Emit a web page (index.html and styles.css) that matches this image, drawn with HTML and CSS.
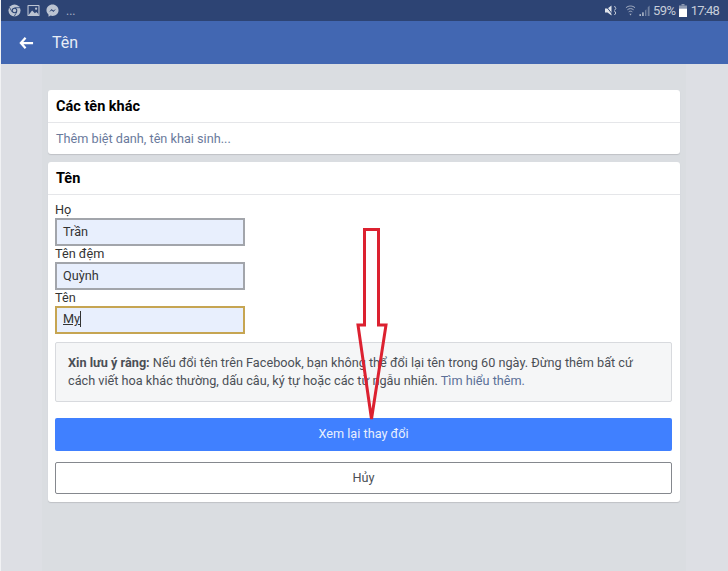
FILE: index.html
```html
<!DOCTYPE html>
<html lang="vi">
<head>
<meta charset="utf-8">
<title>Tên</title>
<link rel="stylesheet" href="styles.css">
</head>
<body>
<div class="page">
  <div class="status">
    <div class="status-left">
      <svg class="si" viewBox="0 0 14 14"><circle cx="7" cy="7" r="6.500" fill="#bcc4d2"/><circle cx="7" cy="7" r="3" fill="#2d4474"/><circle cx="7" cy="7" r="1.800" fill="#bcc4d2"/><path d="M7 4H13M4.400 8.500L1.500 3.500M9.600 8.500L6.500 13.500" stroke="#2d4474" stroke-width="0.900"/></svg>
      <svg class="si" viewBox="0 0 14 14"><rect x="0.500" y="1" width="13" height="12" rx="1" fill="#bcc4d2"/><rect x="1.700" y="2.200" width="10.600" height="9.600" fill="#2d4474"/><path d="M1.700 11.800L5.500 7L8.500 10L10 8.500L12.300 10.800V11.800Z" fill="#bcc4d2"/><circle cx="9.800" cy="5" r="1.200" fill="#bcc4d2"/></svg>
      <svg class="si" viewBox="0 0 14 14"><path d="M7 0.500C3.300 0.500 0.500 3.200 0.500 6.700C0.500 8.500 1.300 10.100 2.700 11.200V13.700L5 12.500C5.600 12.700 6.300 12.800 7 12.800C10.700 12.800 13.500 10.200 13.500 6.700C13.500 3.200 10.700 0.500 7 0.500Z" fill="#bcc4d2"/><path d="M3.300 8.600L6 5.400L7.800 7.100L10.700 5.400L8 8.600L6.200 6.900Z" fill="#2d4474"/></svg>
      <span class="dots">...</span>
    </div>
    <div class="status-right">
      <svg class="mute" viewBox="0 0 12 11"><path d="M0 3.500H2.500L6.500 0.500V10.500L2.500 7.500H0Z" fill="#dfe3ea"/><path d="M0.500 0.500L8 10" stroke="#2d4474" stroke-width="1"/><path d="M9.500 1L10.800 3.500L9.500 5.500M9.500 6L10.800 8L9.500 10" stroke="#c3cad6" fill="none"/></svg>
      <svg class="wifi" viewBox="0 0 12 13"><path d="M1 3.500C4 1 8 1 11 3.500M2.600 5.700C4.800 4 7.200 4 9.400 5.700M4 8C5.300 7 6.700 7 8 8" stroke="#aeb7c8" stroke-width="1" fill="none"/><path d="M6 12L4.800 10H7.200Z" fill="#aeb7c8"/></svg>
      <svg class="signal" viewBox="0 0 12 12"><rect x="0" y="10" width="1.500" height="2" fill="#c3cad6"/><rect x="3" y="8" width="1.500" height="4" fill="#c3cad6"/><path d="M6 12V6L7.500 4.500V12ZM9 12V2.500L11 0.500V12Z" fill="#6f7f9f"/></svg>
      <span class="pct">59%</span>
      <svg class="batt" viewBox="0 0 8 13"><rect x="2.500" y="0" width="3" height="1.500" fill="#8d99b1"/><rect x="0" y="1.500" width="8" height="3" fill="#8d99b1"/><rect x="0" y="4.500" width="8" height="8.500" fill="#fff"/></svg>
      <span class="clock">17:48</span>
    </div>
  </div>
  <header class="topbar">
    <svg class="back" viewBox="0 0 16 14"><path d="M7 1.500L2 7L7 12.500M2.500 7H15" stroke="#fff" stroke-width="2.400" fill="none"/></svg>
    <span class="title">Tên</span>
  </header>
  <main class="content">
    <section class="card">
      <h2 class="card-head">Các tên khác</h2>
      <div class="card-link">Thêm biệt danh, tên khai sinh...</div>
    </section>
    <section class="card">
      <h2 class="card-head">Tên</h2>
      <div class="form">
        <div class="fields">
          <label class="field">Họ<span class="input">Trần</span></label>
          <label class="field">Tên đệm<span class="input">Quỳnh</span></label>
          <label class="field">Tên<span class="input focus"><span class="typed">My</span></span></label>
        </div>
        <div class="notice"><b>Xin lưu ý rằng:</b> Nếu đổi tên trên Facebook, bạn không thể đổi lại tên trong 60 ngày. Đừng thêm bất cứ cách viết hoa khác thường, dấu câu, ký tự hoặc các từ ngẫu nhiên. <span class="more">Tìm hiểu thêm.</span></div>
        <div class="btn primary">Xem lại thay đổi</div>
        <div class="btn secondary">Hủy</div>
      </div>
    </section>
  </main>
  <svg class="arrow" viewBox="0 0 728 571"><path d="M364.500 229.500H378.500V325H386L371.500 419L358 325H364.500Z" fill="none" stroke="#dc2130" stroke-width="3"/></svg>
</div>
</body>
</html>
```
FILE: styles.css
```css
* { box-sizing: border-box; }
html, body { margin: 0; padding: 0; }
body { font-family: Roboto, "Liberation Sans", sans-serif; }
.page { position: relative; width: 728px; height: 571px; overflow: hidden; background: #dddfe4; border-left: 1px solid #f1f2f4; display: flex; flex-direction: column; }
.status { height: 21px; background: #2d4474; display: flex; justify-content: space-between; align-items: center; padding: 0 9px 0 7px; flex: none; }
.status-left, .status-right { display: flex; align-items: center; }
.status-left { gap: 6px; }
.si { width: 13px; height: 13px; display: block; }
.dots { color: #a9b2c4; font-size: 12px; margin-left: 1px; }
.mute { width: 12px; height: 11px; margin-right: 8px; }
.wifi { width: 11px; height: 13px; margin-right: 3px; }
.signal { width: 12px; height: 11px; margin-right: 2px; }
.pct, .clock { color: #c6cdd9; font-size: 13px; letter-spacing: -0.500px; }
.clock { letter-spacing: -0.800px; }
.batt { width: 8px; height: 13px; margin: 0 4px 0 3px; }
.topbar { height: 43px; background: #4267b2; display: flex; align-items: center; padding: 0 0 0 18px; gap: 18px; flex: none; }
.back { width: 15px; height: 14px; }
.title { color: #e8edf6; font-size: 16px; }
.content { flex: 1; margin: 0 42px 0 41px; padding: 26px 6px 0; background: #dadde1; display: flex; flex-direction: column; gap: 8px; }
.card { background: #fff; border-radius: 3px; box-shadow: 0 1px 1px #bfc1c6; }
.card-head { margin: 0; height: 33px; padding: 0 8px; display: flex; align-items: center; font-size: 14.500px; font-weight: 700; color: #000; border-bottom: 1px solid #e5e6e9; }
.card-link { height: 31px; padding: 0 8px; display: flex; align-items: center; font-size: 12.700px; color: #6a7a9c; }
.form { padding: 7px 8px 0 7px; height: 307px; }
.fields { display: flex; flex-direction: column; }
.field { display: flex; flex-direction: column; font-size: 12.700px; color: #333; line-height: 15px; height: 44px; }
.input { width: 190px; height: 28px; margin-top: 1px; background: #e8effd; border: 2px solid #a2a5ab; display: flex; align-items: center; padding: 0 6px 2px; font-size: 12.700px; color: #333; }
.input.focus { border-color: #c6a552; }
.typed { border-right: 1px solid #333; text-decoration: underline; line-height: 16px; }
.notice { margin-top: 8px; height: 60px; padding: 11px 30px 0 12px; background: #f5f6f7; border: 1px solid #d8dade; border-radius: 2px; font-size: 12.700px; line-height: 18px; color: #4b4f56; }
.more { color: #5b7097; }
.btn { display: flex; align-items: center; justify-content: center; font-size: 12.700px; border-radius: 2px; padding-bottom: 2px; }
.primary { margin-top: 16px; height: 33px; background: #4080ff; color: #e8effd; }
.secondary { margin-top: 11px; height: 32px; background: #fff; border: 1px solid #85888e; color: #4b4f56; }
.arrow { position: absolute; left: -1px; top: 0; width: 728px; height: 571px; pointer-events: none; }
```
